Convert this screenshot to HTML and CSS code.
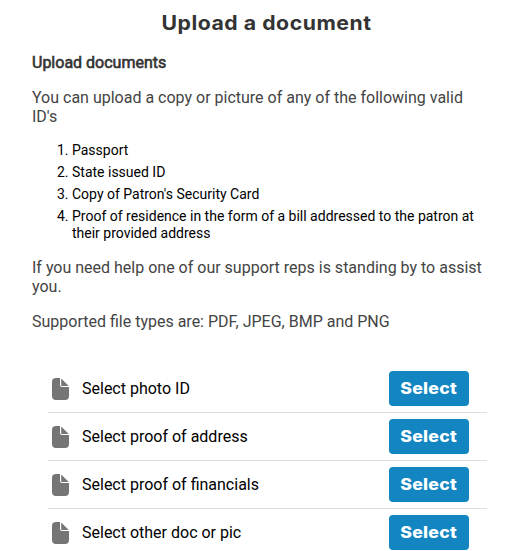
FILE: index.html
```html
<!DOCTYPE html>
<html lang="en">
<head>
<meta charset="utf-8">
<title>Upload a document</title>
<link rel="stylesheet" href="styles.css">
</head>
<body>
<main class="page">
  <h1 class="title"><svg class="title-fit" width="212" height="28"><text x="0.5" y="22" textLength="210" lengthAdjust="spacingAndGlyphs">Upload a document</text></svg></h1>
  <h2 class="subtitle">Upload documents</h2>
  <p class="copy">You can upload a copy or picture of any of the following valid<br>ID's</p>
  <ol class="ids">
    <li>Passport</li>
    <li>State issued ID</li>
    <li>Copy of Patron's Security Card</li>
    <li>Proof of residence in the form of a bill addressed to the patron at their provided address</li>
  </ol>
  <p class="copy">If you need help one of our support reps is standing by to assist<br>you.</p>
  <p class="copy">Supported file types are: PDF, JPEG, BMP and PNG</p>
  <ul class="files">
    <li class="row"><svg class="icon" viewBox="0 0 17 22"><path d="M4 0H8V7Q8 9 10 9H17V18Q17 22 13 22H4Q0 22 0 18V4Q0 0 4 0ZM9.2 .4L16.7 7.9H9.2Z"/></svg><span class="label">Select photo ID</span><button class="select"><span class="select-text">Select</span></button></li>
    <li class="row"><svg class="icon" viewBox="0 0 17 22"><path d="M4 0H8V7Q8 9 10 9H17V18Q17 22 13 22H4Q0 22 0 18V4Q0 0 4 0ZM9.2 .4L16.7 7.9H9.2Z"/></svg><span class="label">Select proof of address</span><button class="select"><span class="select-text">Select</span></button></li>
    <li class="row"><svg class="icon" viewBox="0 0 17 22"><path d="M4 0H8V7Q8 9 10 9H17V18Q17 22 13 22H4Q0 22 0 18V4Q0 0 4 0ZM9.2 .4L16.7 7.9H9.2Z"/></svg><span class="label">Select proof of financials</span><button class="select"><span class="select-text">Select</span></button></li>
    <li class="row"><svg class="icon" viewBox="0 0 17 22"><path d="M4 0H8V7Q8 9 10 9H17V18Q17 22 13 22H4Q0 22 0 18V4Q0 0 4 0ZM9.2 .4L16.7 7.9H9.2Z"/></svg><span class="label">Select other doc or pic</span><button class="select"><span class="select-text">Select</span></button></li>
  </ul>
</main>
</body>
</html>
```
FILE: styles.css
```css
* { box-sizing: border-box; }
body { margin: 0; background: #fff; font-family: Roboto, sans-serif; overflow: hidden; }
.page { padding: 8px 21px 0 32px; }
.title { margin: 0 0 17px; height: 28px; display: flex; padding-left: 129px; }
.title-fit { font: 700 20px Inter, sans-serif; letter-spacing: 0.5px; fill: #333; overflow: visible; }
.subtitle { margin: 0 0 15px; font-size: 16px; line-height: 20px; font-weight: 400; -webkit-text-stroke: 0.6px #333; color: #333; }
.copy { margin: 0 0 16px; font-size: 16px; line-height: 19px; color: #444; white-space: nowrap; }
.ids { margin: 0 0 16px; padding-left: 40px; font-size: 14px; line-height: 17px; color: #000; }
.ids li { margin-bottom: 5px; }
.files { list-style: none; margin: 34px 0 0 16px; padding: 0; }
.row { display: flex; align-items: center; height: 48px; padding: 0 18px 0 3.5px; border-bottom: 1px solid #ddd; }
.row:last-child { border-color: transparent; }
.icon { width: 17px; height: 22px; fill: #757575; }
.label { margin-left: 13.5px; flex: 1; font-size: 16px; }
.select { width: 80px; height: 35px; padding: 0; border: 0; border-radius: 4px; background: #1385c0; color: #fff; font: 800 16px/33px Inter, sans-serif; }
.select-text { display: inline-block; transform: scaleX(1.11); letter-spacing: 0.2px; }
```
